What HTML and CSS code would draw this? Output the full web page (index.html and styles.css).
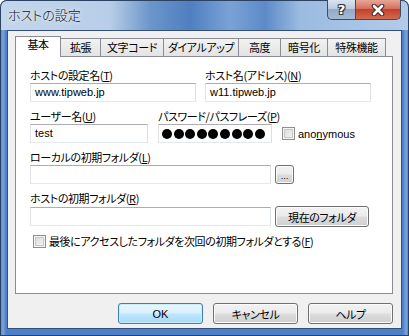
FILE: index.html
```html
<!DOCTYPE html>
<html>
  <head>
    <meta charset="utf-8" />
    <title>ホストの設定</title>
    <link rel="stylesheet" href="styles.css">
  </head>

  <body>
    <div class="window">
      <div class="titlebar">
        <span class="title">ホストの設定</span>
        <div class="caption">
          <span class="cap-help">?</span>
          <span class="cap-close">
            <svg width="14" height="12" viewBox="0 0 14 12">
              <path d="M3 2 L11 10 M11 2 L3 10" stroke="#3a2a28" stroke-width="4.6" stroke-linecap="round" fill="none" />
              <path d="M3 2 L11 10 M11 2 L3 10" stroke="#ffffff" stroke-width="2.6" stroke-linecap="round" fill="none" />
            </svg>
          </span>
        </div>
      </div>

      <div class="client">
        <div class="tabs">
          <span class="tab active">基本</span>
          <span class="tab">拡張</span>
          <span class="tab">文字コード</span>
          <span class="tab">ダイアルアップ</span>
          <span class="tab">高度</span>
          <span class="tab">暗号化</span>
          <span class="tab">特殊機能</span>
        </div>

        <div class="panel">
          <div class="row">
            <div class="field f-half">
              <label>ホストの設定名(<u>T</u>)</label>
              <div class="input">www.tipweb.jp</div>
            </div>
            <div class="field f-half">
              <label>ホスト名(アドレス)(<u>N</u>)</label>
              <div class="input">w11.tipweb.jp</div>
            </div>
          </div>

          <div class="row">
            <div class="field f-user">
              <label>ユーザー名(<u>U</u>)</label>
              <div class="input">test</div>
            </div>
            <div class="field f-pass">
              <label>パスワード/パスフレーズ(<u>P</u>)</label>
              <div class="input dots">
                <span></span><span></span><span></span><span></span><span></span><span></span><span></span><span></span><span></span>
              </div>
            </div>
            <div class="check-wrap anon">
              <span class="check"></span>
              <span class="latin">ano<u>n</u>ymous</span>
            </div>
          </div>

          <div class="row">
            <div class="field">
              <label>ローカルの初期フォルダ(<u>L</u>)</label>
              <div class="line">
                <div class="input f-wide"></div>
                <span class="btn btn-browse">...</span>
              </div>
            </div>
          </div>

          <div class="row">
            <div class="field">
              <label>ホストの初期フォルダ(<u>R</u>)</label>
              <div class="line">
                <div class="input f-wide"></div>
                <span class="btn btn-current">現在のフォルダ</span>
              </div>
            </div>
          </div>

          <div class="check-wrap last">
            <span class="check"></span>
            <span>最後にアクセスしたフォルダを次回の初期フォルダとする(<u>F</u>)</span>
          </div>
        </div>

        <div class="footer">
          <span class="btn btn-dlg default latin">OK</span>
          <span class="btn btn-dlg">キャンセル</span>
          <span class="btn btn-dlg">ヘルプ</span>
        </div>
      </div>
    </div>
  </body>
</html>
```

FILE: styles.css
```css
body {
  margin: 0;
  width: 409px;
  height: 336px;
  overflow: hidden;
  background: #ffffff;
  font-family: "Noto Sans CJK JP", sans-serif;
  font-size: 11px;
  font-weight: 400;
  letter-spacing: -0.4px;
  font-feature-settings: "palt";
  color: #000000;
}
u {
  text-decoration: underline;
  text-underline-offset: 1px;
}
.latin {
  font-family: "Liberation Sans", "Noto Sans CJK JP", sans-serif;
  font-size: 11px;
  font-weight: 400;
  letter-spacing: 0;
}
.window {
  width: 409px;
  height: 336px;
  box-sizing: border-box;
  border-radius: 7px 7px 0 0;
  background: linear-gradient(to right, #4c7dc2 0, #7aa5dc 3px, #4f80c6 6px, #4f80c6 403px, #7aa5dc 406px, #4c7dc2 409px);
  box-shadow: inset 0 0 0 1px #2c4262;
  overflow: hidden;
}
.titlebar {
  height: 30px;
  display: flex;
  align-items: flex-start;
  border-radius: 7px 7px 0 0;
  background: linear-gradient(to right, #c3d6eb 0, #b8cde7 110px, #6c96cb 150px, #4f7fc0 190px, #7aa2d6 230px, #5d8bc8 265px, #9bbbe1 300px, #b3cbe8 409px);
  box-shadow: inset 0 1px 0 #2c4262, inset 1px 0 0 #2c4262, inset -1px 0 0 #2c4262;
}
.title {
  padding: 7px 0 0 8px;
  font-size: 13px;
  font-weight: 300;
  letter-spacing: 0;
  line-height: 15px;
  color: #111111;
  text-shadow: 0 0 6px #e8f0fa, 0 0 3px #e8f0fa;
}
.caption {
  margin-left: auto;
  margin-right: 8px;
  display: flex;
  height: 20px;
}
.cap-help, .cap-close {
  box-sizing: border-box;
  height: 20px;
  display: flex;
  align-items: center;
  justify-content: center;
  border: 1px solid #3d4c63;
  border-top: none;
}
.cap-help {
  width: 28px;
  border-radius: 0 0 0 5px;
  border-right: none;
  background: linear-gradient(to bottom, #d9e4f1 0, #bccbdf 45%, #93a9c6 50%, #a6bad3 100%);
  color: #ffffff;
  font-family: "DejaVu Sans", sans-serif;
  font-weight: bold;
  font-size: 13px;
  letter-spacing: 0;
  text-shadow: 0 0 1px #2a3445, 1px 1px 0 #2a3445, -1px -1px 0 #2a3445, 1px -1px 0 #2a3445, -1px 1px 0 #2a3445;
}
.cap-close {
  width: 46px;
  border-radius: 0 0 5px 0;
  background: linear-gradient(to bottom, #e7a797 0, #d6705e 45%, #c4402a 50%, #d36a52 100%);
}
.client {
  margin: 0 7px;
  height: 299px;
  box-sizing: border-box;
  border: 1px solid #34507a;
  background: #f0f0f0;
  padding: 5px 8px 0 7px;
}
.tabs {
  display: flex;
  align-items: flex-end;
  height: 20px;
  position: relative;
  z-index: 1;
}
.tab {
  box-sizing: border-box;
  height: 18px;
  margin-left: -1px;
  border: 1px solid #898c95;
  border-bottom: none;
  background: linear-gradient(to bottom, #f2f2f2, #e3e3e3);
  text-align: center;
  line-height: 16px;
  white-space: nowrap;
  overflow: hidden;
}
.tab.active {
  height: 21px;
  margin-left: 0;
  margin-bottom: -1px;
  background: #ffffff;
  line-height: 15px;
  position: relative;
  z-index: 2;
}
.tab:nth-child(1) { width: 46px; }
.tab:nth-child(2) { width: 41px; margin-left: -1px; }
.tab:nth-child(3) { width: 64px; }
.tab:nth-child(4) { width: 76px; }
.tab:nth-child(5) { width: 43px; }
.tab:nth-child(6) { width: 48px; }
.tab:nth-child(7) { width: 59px; }
.panel {
  width: 378px;
  height: 238px;
  box-sizing: border-box;
  border: 1px solid #898c95;
  background: #ffffff;
  padding: 11px 0 0 14px;
}
.row {
  display: flex;
  align-items: flex-end;
  margin-bottom: 7px;
}
.field {
  display: flex;
  flex-direction: column;
}
.field label {
  line-height: 14px;
  height: 14px;
  margin-bottom: 1px;
  white-space: nowrap;
}
.input {
  height: 19px;
  box-sizing: border-box;
  border: 1px solid;
  border-color: #abadb3 #dbdfe6 #e3e9ef #e2e3ea;
  background: #ffffff;
  padding: 0 4px;
  font-family: "Liberation Sans", sans-serif;
  font-size: 11px;
  font-weight: 400;
  letter-spacing: 0;
  line-height: 17px;
}
.f-half { width: 166px; }
.f-half + .f-half { margin-left: 9px; }
.f-user { width: 118px; }
.f-pass { width: 114px; margin-left: 10px; }
.f-wide { width: 241px; }
.dots {
  display: flex;
  align-items: center;
  gap: 1.6px;
  padding-left: 3px;
}
.dots span {
  width: 10px;
  height: 10px;
  border-radius: 50%;
  background: #000000;
}
.check-wrap {
  display: flex;
  align-items: center;
  gap: 3px;
  white-space: nowrap;
}
.anon {
  height: 19px;
  margin-left: 10px;
}
.last {
  margin: 5px 0 0 3px;
  line-height: 14px;
}
.check {
  width: 13px;
  height: 13px;
  box-sizing: border-box;
  border: 1px solid #8e8f8f;
  background: linear-gradient(135deg, #d9d9d9, #f6f6f6);
  box-shadow: inset 0 0 0 1px #f4f4f4, inset 0 0 0 2px #c9c9c9;
}
.line {
  display: flex;
  align-items: center;
  gap: 4px;
}
.btn {
  box-sizing: border-box;
  display: flex;
  align-items: center;
  justify-content: center;
  border: 1px solid #707070;
  border-radius: 3px;
  background: linear-gradient(to bottom, #f2f2f2 0, #ebebeb 48%, #dddddd 52%, #cfcfcf 100%);
  box-shadow: inset 0 0 0 1px #fbfbfb;
  white-space: nowrap;
}
.btn-browse {
  width: 19px;
  height: 19px;
  font-family: "Liberation Sans", sans-serif;
  font-size: 9px;
  letter-spacing: 0;
  line-height: 10px;
  padding-top: 2px;
}
.btn-current {
  width: 94px;
  height: 21px;
}
.footer {
  display: flex;
  justify-content: flex-end;
  gap: 10px;
  margin-top: 9px;
}
.btn-dlg {
  width: 85px;
  height: 21px;
}
.btn-dlg.default {
  border-color: #3c7fb1;
  background: linear-gradient(to bottom, #eaf6fd 0, #d9f0fc 48%, #bee6fd 52%, #a7d9f5 100%);
  box-shadow: inset 0 0 0 1px #c7ecfc;
}
```
